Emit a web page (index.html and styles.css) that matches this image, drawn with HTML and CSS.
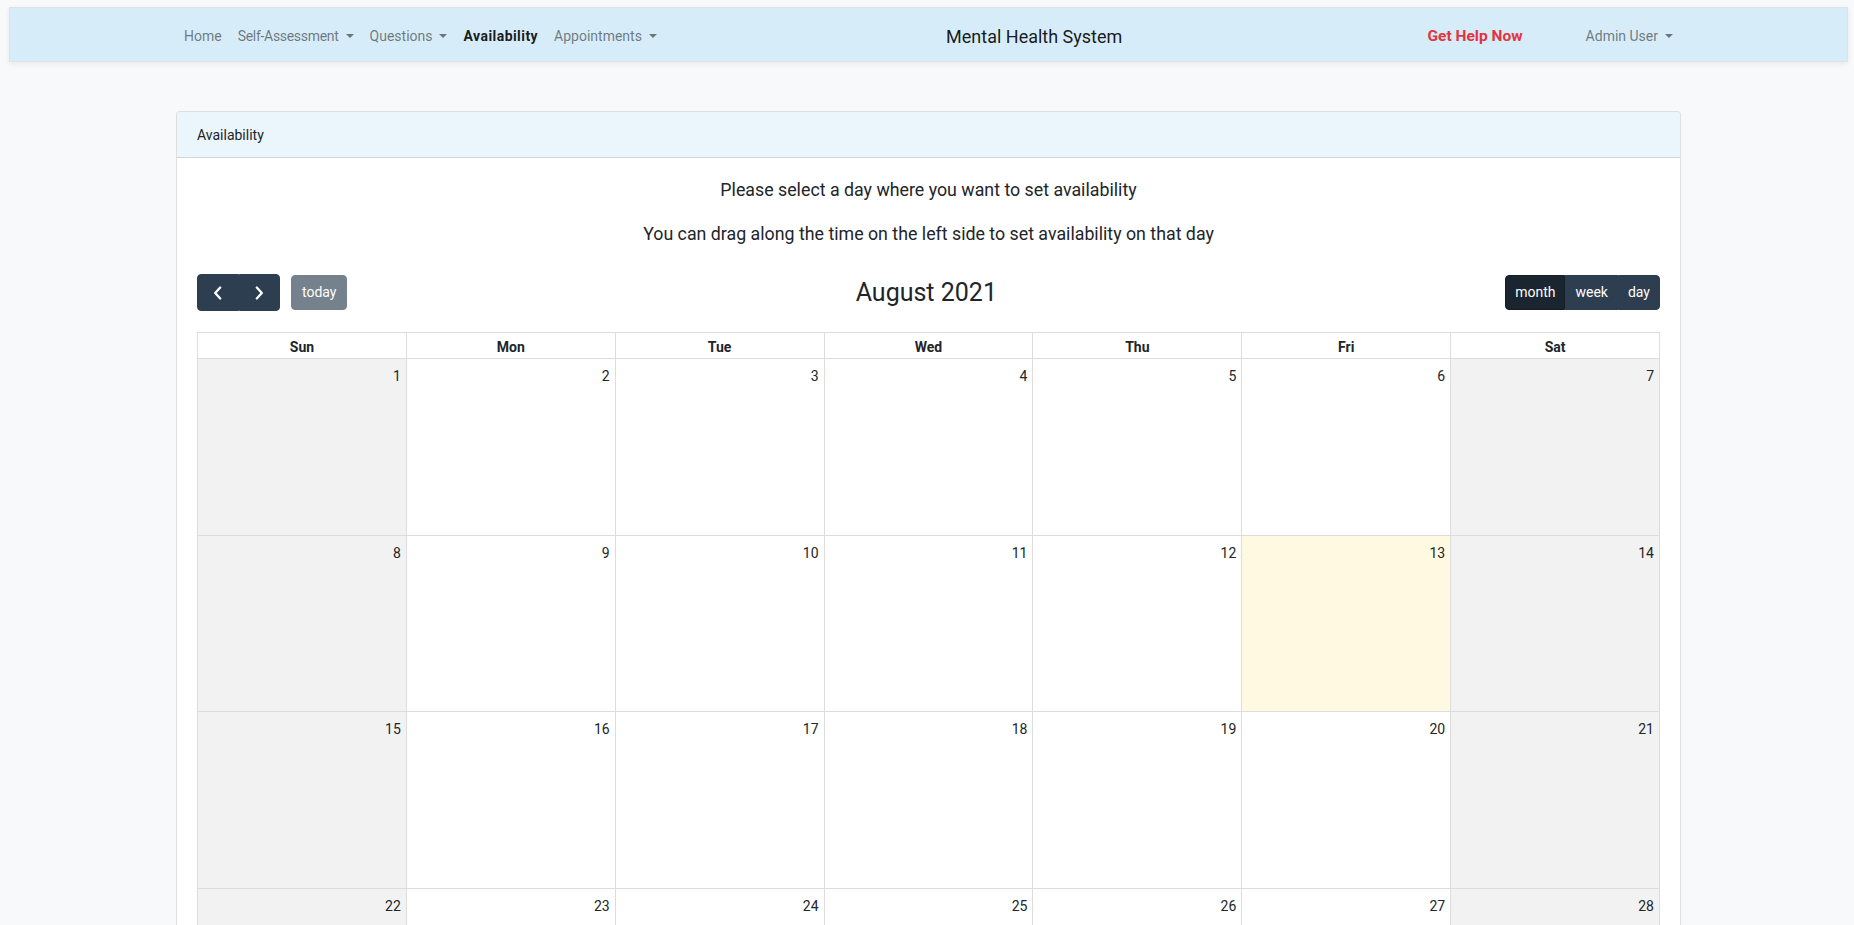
FILE: index.html
```html
<!DOCTYPE html>
<html lang="en">
<head>
<meta charset="utf-8">
<title>Mental Health System - Availability</title>
<link rel="stylesheet" href="styles.css">
</head>
<body>
<nav class="navbar">
  <div class="nav-inner">
    <ul class="nav-left">
      <li><a class="nav-link">Home</a></li>
      <li><a class="nav-link dropdown tight">Self-Assessment</a></li>
      <li><a class="nav-link dropdown">Questions</a></li>
      <li><a class="nav-link active">Availability</a></li>
      <li><a class="nav-link dropdown">Appointments</a></li>
    </ul>
    <div class="brand">Mental Health System</div>
    <div class="nav-right">
      <a class="nav-link help-link">Get Help Now</a>
      <a class="nav-link dropdown">Admin User</a>
    </div>
  </div>
</nav>

<main class="container">
  <section class="card">
    <div class="card-header">Availability</div>
    <div class="card-body">
      <p class="intro">Please select a day where you want to set availability</p>
      <p class="intro">You can drag along the time on the left side to set availability on that day</p>

      <div class="calendar">
        <div class="toolbar">
          <div class="toolbar-left">
            <div class="btn-group">
              <button class="fc-btn icon-btn" aria-label="prev">
                <svg width="10" height="14" viewBox="0 0 10 14"><path d="M7.2 1.5 L2.2 7 L7.2 12.5" fill="none" stroke="#fff" stroke-width="2.3" stroke-linecap="round" stroke-linejoin="round"/></svg>
              </button>
              <button class="fc-btn icon-btn" aria-label="next">
                <svg width="10" height="14" viewBox="0 0 10 14"><path d="M2.8 1.5 L7.8 7 L2.8 12.5" fill="none" stroke="#fff" stroke-width="2.3" stroke-linecap="round" stroke-linejoin="round"/></svg>
              </button>
            </div>
            <button class="fc-btn today-btn" disabled>today</button>
          </div>
          <h2 class="title">August 2021</h2>
          <div class="btn-group">
            <button class="fc-btn active">month</button>
            <button class="fc-btn">week</button>
            <button class="fc-btn">day</button>
          </div>
        </div>

        <div class="month-grid">
          <div class="head">Sun</div><div class="head">Mon</div><div class="head">Tue</div><div class="head">Wed</div><div class="head">Thu</div><div class="head">Fri</div><div class="head">Sat</div>

          <div class="day weekend">1</div><div class="day">2</div><div class="day">3</div><div class="day">4</div><div class="day">5</div><div class="day">6</div><div class="day weekend">7</div>
          <div class="day weekend">8</div><div class="day">9</div><div class="day">10</div><div class="day">11</div><div class="day">12</div><div class="day today">13</div><div class="day weekend">14</div>
          <div class="day weekend">15</div><div class="day">16</div><div class="day">17</div><div class="day">18</div><div class="day">19</div><div class="day">20</div><div class="day weekend">21</div>
          <div class="day weekend">22</div><div class="day">23</div><div class="day">24</div><div class="day">25</div><div class="day">26</div><div class="day">27</div><div class="day weekend">28</div>
          <div class="day weekend">29</div><div class="day">30</div><div class="day">31</div><div class="day other">1</div><div class="day other">2</div><div class="day other">3</div><div class="day weekend other">4</div>
          <div class="day weekend other">5</div><div class="day other">6</div><div class="day other">7</div><div class="day other">8</div><div class="day other">9</div><div class="day other">10</div><div class="day weekend other">11</div>
        </div>
      </div>
    </div>
  </section>
</main>
</body>
</html>
```

FILE: styles.css
```css
html {
  scrollbar-width: none;
}
html::-webkit-scrollbar {
  display: none;
}
* {
  box-sizing: border-box;
}
body {
  margin: 0;
  padding: 7px 6px 40px 9px;
  background: #f8f9fb;
  font-family: Roboto, "Liberation Sans", sans-serif;
  font-size: 14px;
  line-height: 1.5;
  color: #212529;
}

/* Navbar */
.navbar {
  height: 55px;
  background: #d6ecf8;
  border: 1px solid #dde3e8;
  box-shadow: 0 2px 5px rgba(0, 0, 0, 0.07);
  display: flex;
  align-items: center;
}
.nav-inner {
  width: 1505px;
  margin: 0 auto;
  display: flex;
  align-items: center;
  justify-content: space-between;
}
.nav-left {
  list-style: none;
  margin: 0;
  padding: 0;
  display: flex;
  align-items: center;
}
.nav-link {
  display: block;
  padding: 10px 8px 6px;
  color: rgba(0, 0, 0, 0.5);
  font-size: 14px;
  cursor: pointer;
}
.nav-link.tight {
  letter-spacing: -0.3px;
}
.nav-link.active {
  color: rgba(0, 0, 0, 0.9);
  font-weight: 700;
  letter-spacing: 0.45px;
}
.dropdown::after {
  content: "";
  display: inline-block;
  margin-left: 7px;
  vertical-align: 3px;
  border-top: 4.5px solid;
  border-left: 4px solid transparent;
  border-right: 4px solid transparent;
}
.brand {
  font-size: 18px;
  color: rgba(0, 0, 0, 0.9);
  padding: 7px 0 3px;
  margin-right: 16px;
}
.nav-right {
  display: flex;
  align-items: center;
  gap: 47px;
}
.nav-link.help-link {
  color: #e3343f;
  font-weight: 700;
  font-size: 15.5px;
}

/* Card */
.container {
  width: 1505px;
  margin: 49px auto 0;
}
.card {
  background: #fff;
  border: 1px solid rgba(0, 0, 0, 0.125);
  border-radius: 4px;
}
.card-header {
  background: #ebf5fc;
  border-bottom: 1px solid rgba(0, 0, 0, 0.125);
  padding: 13px 20px 11px;
  font-size: 14px;
  line-height: 21px;
  border-radius: 3px 3px 0 0;
}
.card-body {
  padding: 19px 20px 20px;
}
.intro {
  text-align: center;
  font-size: 17.8px;
  line-height: 26px;
  margin: 0 0 18px;
}

/* Calendar */
.calendar {
  margin-top: 27px;
}
.toolbar {
  display: flex;
  justify-content: space-between;
  align-items: center;
  margin-bottom: 21px;
}
.toolbar-left {
  display: flex;
  align-items: center;
  gap: 11px;
}
.title {
  margin: 0;
  font-size: 25px;
  font-weight: 400;
  line-height: 1.2;
}
.btn-group {
  display: flex;
}
.fc-btn {
  font-family: inherit;
  font-size: 14px;
  line-height: 21px;
  padding: 6px 9px;
  color: #fff;
  background: #2c3e50;
  border: 1px solid #2c3e50;
  border-radius: 0;
  cursor: pointer;
}
.btn-group .fc-btn:first-child {
  border-radius: 4px 0 0 4px;
}
.btn-group .fc-btn:last-child {
  border-radius: 0 4px 4px 0;
}
.fc-btn.active {
  background: #1a252f;
  border-color: #151e27;
}
.icon-btn {
  width: 41.5px;
  height: 37px;
  padding: 0;
  display: flex;
  align-items: center;
  justify-content: center;
}
.today-btn {
  border-radius: 4px;
  padding: 6px 10px;
  opacity: 0.65;
  cursor: default;
}

.month-grid {
  display: grid;
  grid-template-columns: repeat(7, 1fr);
  grid-template-rows: 26px repeat(6, 176.6px);
  border-top: 1px solid #ddd;
  border-left: 1px solid #ddd;
}
.head,
.day {
  border-right: 1px solid #ddd;
  border-bottom: 1px solid #ddd;
}
.head {
  text-align: center;
  font-weight: 700;
  font-size: 14px;
  line-height: 21px;
  padding: 4px 4px 0;
  background: #fff;
}
.day {
  text-align: right;
  padding: 7px 5px 3px;
  font-size: 14px;
  line-height: 20px;
  background: #fff;
}
.day.weekend {
  background: #f2f2f2;
}
.day.today {
  background: #fef9e0;
}
.day.other {
  color: rgba(33, 37, 41, 0.35);
}
```
